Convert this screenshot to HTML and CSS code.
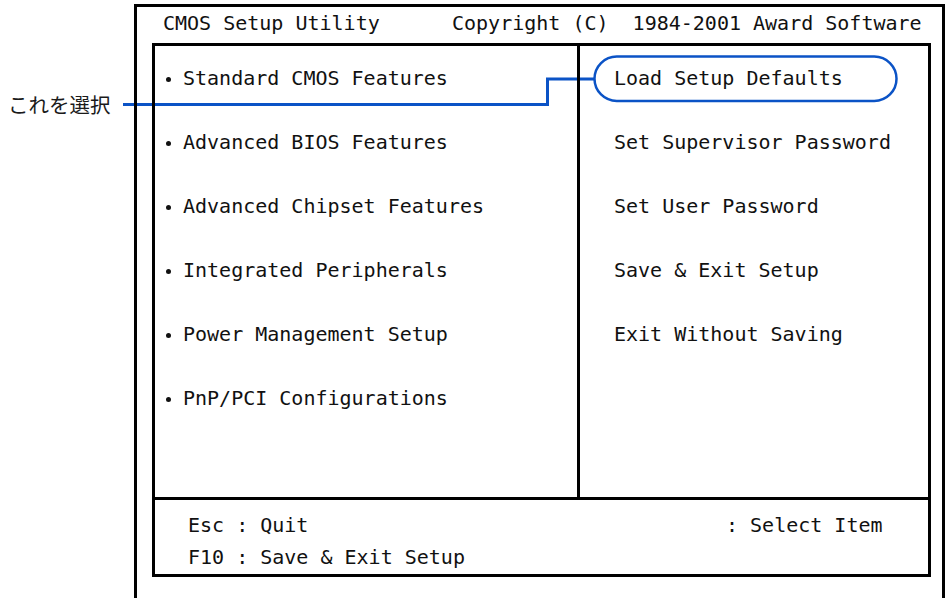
FILE: index.html
```html
<!DOCTYPE html>
<html lang="ja">
<head>
<meta charset="utf-8">
<title>CMOS Setup Utility</title>
<link rel="stylesheet" href="styles.css">
</head>
<body>
<div class="page">
  <div class="gutter">
    <span class="label">これを選択</span>
  </div>
  <div class="frame">
    <div class="header">CMOS Setup Utility      Copyright (C)  1984-2001 Award Software</div>
    <div class="panel">
      <div class="main">
        <ul class="menu menu-left">
          <li>Standard CMOS Features</li>
          <li>Advanced BIOS Features</li>
          <li>Advanced Chipset Features</li>
          <li>Integrated Peripherals</li>
          <li>Power Management Setup</li>
          <li>PnP/PCI Configurations</li>
        </ul>
        <ul class="menu menu-right">
          <li>Load Setup Defaults</li>
          <li>Set Supervisor Password</li>
          <li>Set User Password</li>
          <li>Save &amp; Exit Setup</li>
          <li>Exit Without Saving</li>
        </ul>
      </div>
      <div class="footer">
        <div class="keys">
          <span>Esc : Quit</span>
          <span>: Select Item</span>
        </div>
        <div class="keys">
          <span>F10 : Save &amp; Exit Setup</span>
        </div>
      </div>
    </div>
  </div>
  <svg class="callout" width="945" height="598" viewBox="0 0 945 598" aria-hidden="true">
    <path d="M123 104.5 H547.5 V79 H594" fill="none" stroke="#0b53c6" stroke-width="3"/>
    <rect x="594.5" y="56.5" width="302" height="44.5" rx="22.25" ry="22.25" fill="none" stroke="#0b53c6" stroke-width="2.5"/>
  </svg>
</div>
</body>
</html>
```

FILE: styles.css
```css
html, body {
  margin: 0;
  padding: 0;
  background: #ffffff;
}

body {
  width: 945px;
  height: 598px;
  overflow: hidden;
}

.page {
  position: relative;
  display: flex;
  width: 945px;
  height: 598px;
}

.gutter {
  width: 134px;
  flex: none;
}

.label {
  display: block;
  margin-top: 90px;
  padding-left: 8px;
  font-family: "Noto Sans CJK JP", "Noto Sans", sans-serif;
  font-size: 20.5px;
  line-height: 28px;
  color: #1a1a1a;
}

.frame {
  position: relative;
  z-index: 1;
  margin-top: 4px;
  width: 811px;
  height: 594px;
  box-sizing: border-box;
  border: 3px solid #000;
  border-bottom: none;
  font-family: "DejaVu Sans Mono", "Liberation Mono", monospace;
  font-size: 20px;
  color: #111;
}

.header {
  height: 36px;
  line-height: 32px;
  padding-left: 26px;
  white-space: pre;
}

.panel {
  margin-left: 15px;
  width: 779px;
  height: 534px;
  box-sizing: border-box;
  border: 3px solid #000;
  display: flex;
  flex-direction: column;
}

.main {
  display: flex;
  height: 451px;
  flex: none;
}

.menu {
  list-style: none;
  margin: 0;
  padding: 0;
}

.menu li {
  height: 64px;
  line-height: 64px;
  white-space: pre;
}

.menu-left {
  width: 422px;
  border-right: 3px solid #000;
}

.menu-left li::before {
  content: "";
  display: inline-block;
  width: 5px;
  height: 5px;
  border-radius: 50%;
  background: #111;
  margin: 0 12px 0 11px;
  vertical-align: middle;
}

.menu-right {
  flex: 1;
  padding-left: 34px;
}

.footer {
  border-top: 3px solid #000;
  flex: 1;
  padding: 9px 0 0 33px;
}

.keys {
  display: grid;
  grid-template-columns: 538px auto;
  height: 32px;
  line-height: 32px;
  white-space: pre;
}

.callout {
  position: absolute;
  left: 0;
  top: 0;
  z-index: 0;
  pointer-events: none;
}
```
